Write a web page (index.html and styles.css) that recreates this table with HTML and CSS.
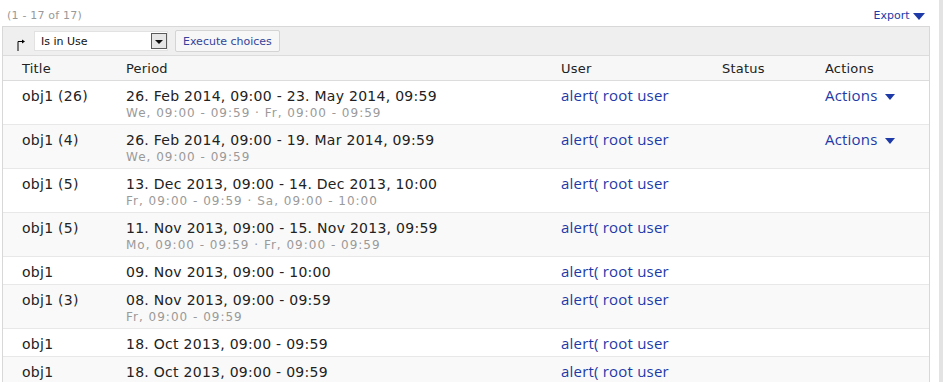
FILE: index.html
```html
<!DOCTYPE html>
<html>
<head>
<meta charset="utf-8">
<link rel="stylesheet" href="styles.css">
</head>
<body>
<div class="page">
  <div class="main">
    <div class="topbar">
      <span class="count">(1 - 17 of 17)</span>
      <a class="export">Export <span class="tri"></span></a>
    </div>
    <div class="grid">
      <div class="toolbar">
        <svg class="branch" width="9" height="12" viewBox="0 0 9 12"><path d="M1 12V2.5h5" stroke="#000" stroke-width="1" fill="none"/><path d="M5 0.5l3 2-3 2z" fill="#000"/></svg>
        <div class="select"><span class="selval">Is in Use</span><span class="dd"><span class="ddtri"></span></span></div>
        <button class="exec">Execute choices</button>
      </div>
      <table class="tbl">
        <colgroup><col class="c1"><col class="c2"><col class="c3"><col class="c4"><col class="c5"></colgroup>
        <thead>
          <tr><th>Title</th><th>Period</th><th>User</th><th>Status</th><th>Actions</th></tr>
        </thead>
        <tbody>
          <tr class="two"><td>obj1 (26)</td><td><div>26. Feb 2014, 09:00 - 23. May 2014, 09:59</div><div class="sub">We, 09:00 - 09:59 · Fr, 09:00 - 09:59</div></td><td><a class="user">alert( root user</a></td><td></td><td><a class="act">Actions <span class="tri small"></span></a></td></tr>
          <tr class="two"><td>obj1 (4)</td><td><div>26. Feb 2014, 09:00 - 19. Mar 2014, 09:59</div><div class="sub">We, 09:00 - 09:59</div></td><td><a class="user">alert( root user</a></td><td></td><td><a class="act">Actions <span class="tri small"></span></a></td></tr>
          <tr class="two"><td>obj1 (5)</td><td><div>13. Dec 2013, 09:00 - 14. Dec 2013, 10:00</div><div class="sub">Fr, 09:00 - 09:59 · Sa, 09:00 - 10:00</div></td><td><a class="user">alert( root user</a></td><td></td><td></td></tr>
          <tr class="two"><td>obj1 (5)</td><td><div>11. Nov 2013, 09:00 - 15. Nov 2013, 09:59</div><div class="sub">Mo, 09:00 - 09:59 · Fr, 09:00 - 09:59</div></td><td><a class="user">alert( root user</a></td><td></td><td></td></tr>
          <tr class="one"><td>obj1</td><td><div>09. Nov 2013, 09:00 - 10:00</div></td><td><a class="user">alert( root user</a></td><td></td><td></td></tr>
          <tr class="two"><td>obj1 (3)</td><td><div>08. Nov 2013, 09:00 - 09:59</div><div class="sub">Fr, 09:00 - 09:59</div></td><td><a class="user">alert( root user</a></td><td></td><td></td></tr>
          <tr class="one"><td>obj1</td><td><div>18. Oct 2013, 09:00 - 09:59</div></td><td><a class="user">alert( root user</a></td><td></td><td></td></tr>
          <tr class="one"><td>obj1</td><td><div>18. Oct 2013, 09:00 - 09:59</div></td><td><a class="user">alert( root user</a></td><td></td><td></td></tr>
        </tbody>
      </table>
    </div>
  </div>
  <div class="side"></div>
</div>
</body>
</html>
```

FILE: styles.css
```css
html, body {
  margin: 0;
  padding: 0;
  background: #fff;
  overflow: hidden;
}
body {
  font-family: "DejaVu Sans", Verdana, sans-serif;
  color: #222;
}
.page {
  display: flex;
  width: 943px;
  height: 382px;
  overflow: hidden;
}
.main {
  width: 930px;
  padding-left: 2px;
}
.side {
  margin-left: 7px;
  width: 4px;
  background: #e3e3e3;
}
.topbar {
  height: 26px;
  display: flex;
  justify-content: space-between;
  align-items: flex-start;
}
.count {
  font-size: 11px;
  letter-spacing: 0.2px;
  color: #999;
  margin: 9px 0 0 5px;
}
.export {
  font-size: 11px;
  color: #1d3aa8;
  margin: 9px 7px 0 0;
}
.tri {
  display: inline-block;
  width: 0;
  height: 0;
  border-left: 6px solid transparent;
  border-right: 6px solid transparent;
  border-top: 7px solid #1d3aa8;
  vertical-align: middle;
  margin-left: 0;
}
.tri.small {
  border-left-width: 5px;
  border-right-width: 5px;
  border-top-width: 6px;
  margin-left: 3px;
}
.grid {
  border: 1px solid #d8d8d8;
  border-bottom: none;
  width: 926px;
}
.toolbar {
  height: 28px;
  background: #efefef;
  border-bottom: 1px solid #dcdcdc;
  display: flex;
  align-items: center;
  padding-left: 14px;
}
.branch {
  margin-top: 7px;
  margin-right: 8px;
}
.select {
  width: 132px;
  height: 18px;
  background: #fff;
  border: 1px solid #e2e2e2;
  display: flex;
  align-items: center;
  justify-content: space-between;
  font-size: 11px;
  color: #111;
}
.selval {
  padding-left: 6px;
}
.dd {
  box-sizing: border-box;
  width: 16px;
  height: 16px;
  border: 1px solid #5a5a5a;
  background: #e6e6e6;
  display: flex;
  align-items: center;
  justify-content: center;
}
.ddtri {
  width: 0;
  height: 0;
  border-left: 4px solid transparent;
  border-right: 4px solid transparent;
  border-top: 4px solid #111;
  margin-top: 2px;
}
.exec {
  margin-left: 7px;
  height: 22px;
  padding: 0 7px;
  font-family: "DejaVu Sans", Verdana, sans-serif;
  font-size: 11px;
  color: #33449a;
  background: #f7f7f7;
  border: 1px solid #d4d4d4;
  border-radius: 2px;
}
.tbl {
  width: 926px;
  table-layout: fixed;
  border-collapse: collapse;
}
.c1 { width: 104px; }
.c2 { width: 435px; }
.c3 { width: 161px; }
.c4 { width: 103px; }
.c5 { width: 123px; }
th {
  background: #f7f7f7;
  font-weight: normal;
  text-align: left;
  font-size: 13px;
  letter-spacing: 0.2px;
  height: 24px;
  padding: 0 0 0 19px;
  border-bottom: 1px solid #dcdcdc;
  color: #222;
}
td {
  vertical-align: top;
  font-size: 14px;
  letter-spacing: 0.27px;
  padding: 6px 0 0 19px;
  line-height: 18px;
  border-bottom: 1px solid #e8e8e8;
  white-space: nowrap;
}
tr.two { height: 44px; }
tr.one { height: 28px; }
tbody tr:nth-child(even) { background: #f9f9f9; }
.sub {
  font-size: 12px;
  letter-spacing: 1px;
  color: #9a9a9a;
  line-height: 14px;
  margin-top: 1px;
}
.user, .act {
  color: #1d3aa8;
  font-family: "Open Sans", "DejaVu Sans", sans-serif;
  font-size: 15px;
  line-height: 16px;
  letter-spacing: 0.2px;
}
```
